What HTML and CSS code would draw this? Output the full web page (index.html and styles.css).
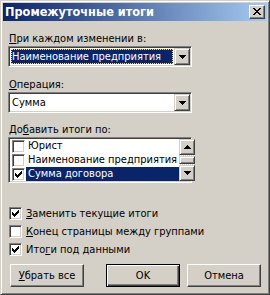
FILE: index.html
```html
<!DOCTYPE html>
<html lang="ru">
<head>
<meta charset="utf-8">
<title>Промежуточные итоги</title>
<link rel="stylesheet" href="styles.css">
</head>
<body>
<div class="window">
  <div class="titlebar">
    <span class="title">Промежуточные итоги</span>
    <div class="close">
      <svg width="8" height="7" viewBox="0 0 8 7" shape-rendering="crispEdges"><path d="M0 0h2v1H0zM6 0h2v1H6zM1 1h2v1H1zM5 1h2v1H5zM2 2h4v1H2zM3 3h2v1H3zM2 4h4v1H2zM1 5h2v1H1zM5 5h2v1H5zM0 6h2v1H0zM6 6h2v1H6z" fill="#000"/></svg>
    </div>
  </div>
  <div class="body">
    <div class="lbl"><u>П</u>ри каждом изменении в:</div>
    <div class="combo">
      <div class="field"><span class="val sel">Наименование предприятия</span></div>
      <div class="btn3d drop"><svg width="7" height="4" viewBox="0 0 7 4" shape-rendering="crispEdges"><path d="M0 0h7v1H0zM1 1h5v1H1zM2 2h3v1H2zM3 3h1v1H3z" fill="#000"/></svg></div>
    </div>

    <div class="lbl gap"><u>О</u>перация:</div>
    <div class="combo">
      <div class="field"><span class="val">Сумма</span></div>
      <div class="btn3d drop"><svg width="7" height="4" viewBox="0 0 7 4" shape-rendering="crispEdges"><path d="M0 0h7v1H0zM1 1h5v1H1zM2 2h3v1H2zM3 3h1v1H3z" fill="#000"/></svg></div>
    </div>

    <div class="lbl gap2">До<u>б</u>авить итоги по:</div>
    <div class="listbox">
      <div class="items">
        <div class="item"><span class="lbox"></span><span class="itext">Юрист</span></div>
        <div class="item"><span class="lbox"></span><span class="itext">Наименование предприятия</span></div>
        <div class="item"><span class="lbox"><svg width="11" height="11" viewBox="0 0 11 11" shape-rendering="crispEdges"><path d="M2 4h1v3H2zM3 5h1v3H3zM4 6h1v3H4zM5 5h1v3H5zM6 4h1v3H6zM7 3h1v3H7zM8 2h1v3H8z" fill="#000"/></svg></span><span class="itext sel">Сумма договора</span></div>
      </div>
      <div class="scroll">
        <div class="btn3d sbtn"><svg width="7" height="4" viewBox="0 0 7 4" shape-rendering="crispEdges"><path d="M3 0h1v1H3zM2 1h3v1H2zM1 2h5v1H1zM0 3h7v1H0z" fill="#000"/></svg></div>
        <div class="track"><div class="btn3d thumb"></div></div>
        <div class="btn3d sbtn"><svg width="7" height="4" viewBox="0 0 7 4" shape-rendering="crispEdges"><path d="M0 0h7v1H0zM1 1h5v1H1zM2 2h3v1H2zM3 3h1v1H3z" fill="#000"/></svg></div>
      </div>
    </div>

    <div class="checks">
      <div class="chk"><span class="cbox"><svg width="11" height="11" viewBox="0 0 11 11" shape-rendering="crispEdges"><path d="M2 4h1v3H2zM3 5h1v3H3zM4 6h1v3H4zM5 5h1v3H5zM6 4h1v3H6zM7 3h1v3H7zM8 2h1v3H8z" fill="#000"/></svg></span><span class="ctext"><u>З</u>аменить текущие итоги</span></div>
      <div class="chk"><span class="cbox"></span><span class="ctext"><u>К</u>онец страницы между группами</span></div>
      <div class="chk"><span class="cbox"><svg width="11" height="11" viewBox="0 0 11 11" shape-rendering="crispEdges"><path d="M2 4h1v3H2zM3 5h1v3H3zM4 6h1v3H4zM5 5h1v3H5zM6 4h1v3H6zM7 3h1v3H7zM8 2h1v3H8z" fill="#000"/></svg></span><span class="ctext">Ито<u>г</u>и под данными</span></div>
    </div>

    <div class="buttons">
      <div class="pbtn"><span><u>У</u>брать все</span></div>
      <div class="pbtn default ok"><span>OK</span></div>
      <div class="pbtn cancel"><span>Отмена</span></div>
    </div>
  </div>
</div>
</body>
</html>
```
FILE: styles.css
```css
* { box-sizing: border-box; margin: 0; padding: 0; }
html, body { width: 270px; height: 295px; overflow: hidden; background: #d4d0c8; }
body {
  font-family: "DejaVu Sans Condensed", "DejaVu Sans", "Liberation Sans", sans-serif;
  font-size: 11px;
  color: #000;
}
u { text-decoration: underline; text-underline-offset: 1px; }

.window {
  width: 270px;
  height: 295px;
  border: 1px solid;
  border-color: #d4d0c8 #404040 #404040 #d4d0c8;
  box-shadow: inset 1px 1px #fff, inset -1px -1px #808080;
  padding: 2px;
  display: flex;
  flex-direction: column;
  background: #d4d0c8;
}

.titlebar {
  height: 18px;
  flex: none;
  display: flex;
  align-items: flex-start;
  background: linear-gradient(to right, #0a246a, #a6caf0);
}
.title {
  flex: 1;
  padding-left: 2px;
  line-height: 18px;
  font-family: "DejaVu Sans Condensed", "DejaVu Sans", sans-serif;
  font-weight: bold;
  font-size: 12.6px;
  color: #fff;
  white-space: nowrap;
}
.close {
  width: 16px;
  height: 14px;
  margin: 2px 2px 0 0;
  border: 1px solid;
  border-color: #fff #404040 #404040 #fff;
  box-shadow: inset -1px -1px #808080;
  background: #d4d0c8;
  display: flex;
  align-items: center;
  justify-content: center;
  padding: 0 1px 1px 0;
}
.close svg { display: block; }

.body {
  flex: 1;
  display: flex;
  flex-direction: column;
  padding: 11px 0 0 5px;
}

.lbl {
  height: 13px;
  line-height: 13px;
  padding-left: 1px;
  white-space: nowrap;
}
.lbl.gap { margin-top: 11px; }
.lbl.gap2 { margin-top: 10px; }

.combo {
  margin-top: 1px;
  width: 184px;
  height: 21px;
  border: 1px solid;
  border-color: #808080 #fff #fff #808080;
  box-shadow: inset 1px 1px #404040, inset -1px -1px #d4d0c8;
  padding: 1px;
  background: #fff;
  display: flex;
}
.field {
  flex: 1;
  padding: 1px;
  display: flex;
}
.val {
  flex: 1;
  line-height: 13px;
  height: 15px;
  border: 1px solid transparent;
  white-space: nowrap;
  overflow: hidden;
}
.val.sel {
  background: #0a246a;
  color: #fff;
  border: 1px dotted #f2d98c;
}

.btn3d {
  border: 1px solid;
  border-color: #d4d0c8 #404040 #404040 #d4d0c8;
  box-shadow: inset 1px 1px #fff, inset -1px -1px #808080;
  background: #d4d0c8;
  display: flex;
  align-items: center;
  justify-content: center;
}
.btn3d svg { display: block; }
.drop { width: 16px; height: 17px; flex: none; }

.listbox {
  margin-top: 1px;
  width: 184px;
  height: 46px;
  border: 1px solid;
  border-color: #808080 #fff #fff #808080;
  box-shadow: inset 1px 1px #404040, inset -1px -1px #d4d0c8;
  padding: 1px;
  background: #fff;
  display: flex;
}
.items { flex: 1; display: flex; flex-direction: column; }
.item {
  height: 14px;
  display: flex;
  align-items: flex-start;
}
.lbox, .cbox {
  width: 13px;
  height: 13px;
  flex: none;
  border: 1px solid;
  border-color: #808080 #fff #fff #808080;
  box-shadow: inset 1px 1px #404040, inset -1px -1px #d4d0c8;
  background: #fff;
  padding: 1px;
}
.lbox svg, .cbox svg { display: block; margin: -1px 0 0 -1px; }
.lbox { margin: 1px 0 0 2px; }
.itext {
  flex: 1;
  margin-left: 1px;
  padding: 0 2px;
  height: 14px;
  line-height: 14px;
  white-space: nowrap;
  overflow: hidden;
}
.itext.sel { background: #0a246a; color: #fff; }

.scroll { width: 16px; flex: none; display: flex; flex-direction: column; }
.sbtn { height: 16px; }
.track {
  height: 10px;
  padding-top: 1px;
  background: repeating-conic-gradient(#fff 0 25%, #d4d0c8 0 50%) 0 0 / 2px 2px;
}
.thumb { height: 8px; }

.checks { margin-top: 22px; display: flex; flex-direction: column; }
.chk {
  height: 18px;
  display: flex;
  align-items: flex-start;
  padding-left: 1px;
}
.cbox { margin-top: 2px; }
.ctext { margin: 2px 0 0 4px; line-height: 13px; white-space: nowrap; }

.buttons {
  margin-top: 5px;
  display: flex;
  padding-left: 2px;
}
.pbtn {
  width: 74px;
  height: 23px;
  border: 1px solid;
  border-color: #fff #404040 #404040 #fff;
  box-shadow: inset -1px -1px #808080;
  background: #d4d0c8;
  display: flex;
  align-items: center;
  justify-content: center;
  line-height: 13px;
  white-space: nowrap;
}
.pbtn.default {
  border: 1px solid #000;
  box-shadow: inset 1px 1px #fff, inset -1px -1px #404040, inset -2px -2px #808080;
}
.ok { margin-left: 22px; }
.cancel { margin-left: 7px; }
```
